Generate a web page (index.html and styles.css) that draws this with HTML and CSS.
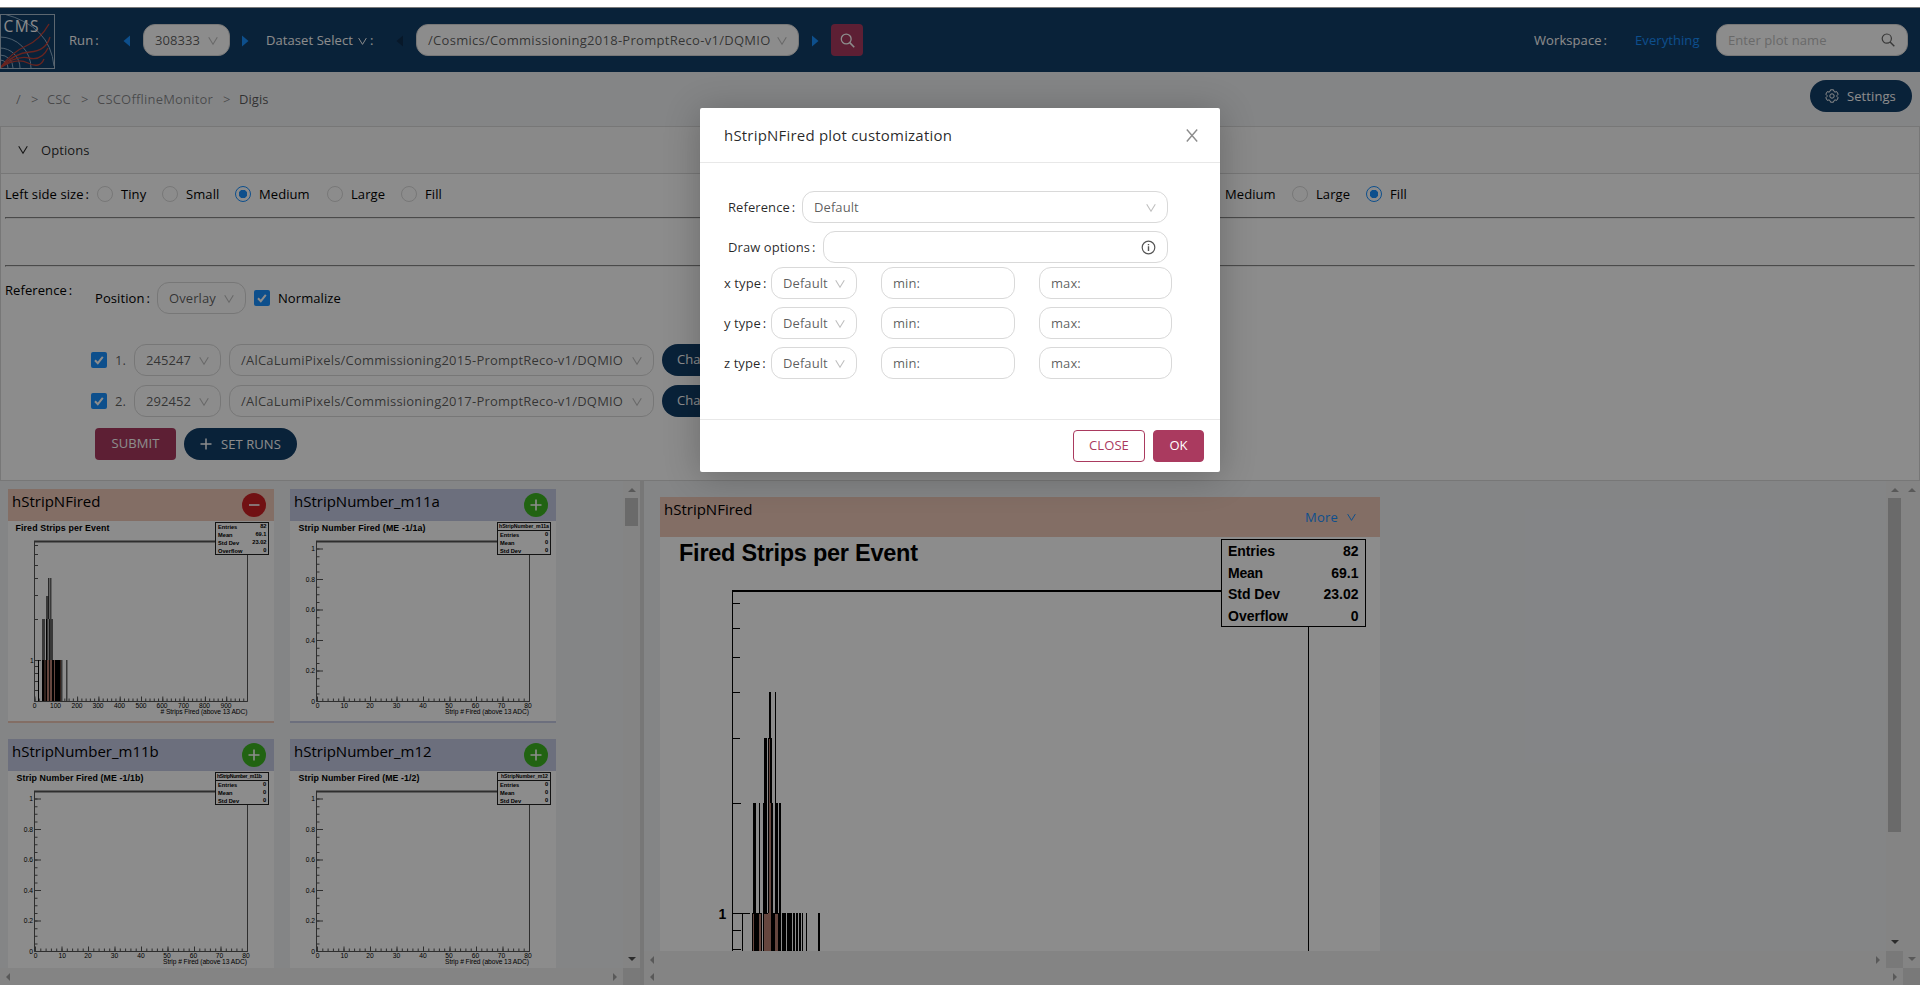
FILE: index.html
```
<!DOCTYPE html>
<html lang="en">
<head>
<meta charset="utf-8">
<title>CMS DQM</title>
<link rel="stylesheet" href="styles.css">
</head>
<body>
<svg class="defs" width="0" height="0">
  <symbol id="chev" viewBox="0 0 10 10"><path d="M.7 1.2 5 8.2 9.3 1.2" fill="none" stroke="currentColor" stroke-width="1.1"/></symbol>
  <symbol id="search" viewBox="0 0 14 14"><circle cx="5.8" cy="5.6" r="4.6" fill="none" stroke="currentColor" stroke-width="1.2"/><path d="m9.1 9 4.2 4.3" stroke="currentColor" stroke-width="1.4"/></symbol>
  <symbol id="check" viewBox="0 0 16 16"><path d="m4 8.2 2.8 3 5-6.4" fill="none" stroke="#fff" stroke-width="2"/></symbol>
  <symbol id="tl" viewBox="0 0 7 12"><path d="M7 .5v11L.5 6z" fill="currentColor"/></symbol>
  <symbol id="tr" viewBox="0 0 7 12"><path d="M0 .5v11L6.5 6z" fill="currentColor"/></symbol>
  <symbol id="axes" viewBox="0 0 266 200" overflow="visible">
    <g stroke="#555" fill="none">
      <path d="M26.5 20V180.5H239.5V20"/>
      <path d="M26 20.5H240" stroke-width="2"/>
      <path d="M28 181V27.5" stroke-width="3" stroke-dasharray="1 6.62"/>
      <path d="M30 181V27.5" stroke-width="6" stroke-dasharray="1 29.48"/>
      <path d="M27 179H240" stroke-width="3" stroke-dasharray="1 4.3"/>
      <path d="M27 178H240" stroke-width="5" stroke-dasharray="1 25.5"/>
    </g>
    <rect x="207.5" y="1.5" width="53" height="32" fill="#fff" stroke="#222"/>
    <path d="M207.5 9.5h53" stroke="#222"/>
  </symbol>
</svg>

<header class="top">
  <svg class="logo" width="55" height="55" viewBox="0 0 55 55">
    <g fill="none" stroke="#8fb0cb" stroke-width="1"><circle cx="0" cy="54" r="8"/><circle cx="0" cy="54" r="13"/><circle cx="0" cy="54" r="20"/><circle cx="0" cy="54" r="31"/><path d="M4 0Q50 12 54 52"/></g>
    <g fill="none" stroke="#c0433a" stroke-width="1.3"><path d="M0 54Q12 38 26 32T49 10"/><path d="M0 54Q14 39 30 38T50 23"/><path d="M0 54Q16 41 29 44T48 34"/><path d="M0 54Q16 43 28 49T44 45"/></g>
    <rect x=".5" y=".5" width="54" height="54" fill="none" stroke="#a9bccd"/>
    <text class="logo-text" x="3.5" y="17.5" textLength="35">CMS</text>
  </svg>
  <span class="run-label">Run<em>:</em></span>
  <svg class="arrow a1" width="7" height="12"><use href="#tl"/></svg>
  <div class="sel w87"><span>308333</span><svg width="10" height="10"><use href="#chev"/></svg></div>
  <svg class="arrow a2" width="7" height="12"><use href="#tr"/></svg>
  <span class="ds">Dataset Select</span><svg class="ds-chev" width="9" height="9"><use href="#chev"/></svg><span class="colon">:</span>
  <svg class="arrow a3" width="7" height="12"><use href="#tl"/></svg>
  <div class="sel w383"><span>/Cosmics/Commissioning2018-PromptReco-v1/DQMIO</span><svg width="10" height="10"><use href="#chev"/></svg></div>
  <svg class="arrow a4" width="7" height="12"><use href="#tr"/></svg>
  <div class="find"><svg width="15" height="15"><use href="#search"/></svg></div>
  <span class="ws">Workspace<em>:</em></span><span class="every">Everything</span>
  <div class="plot-search"><span>Enter plot name</span><svg width="14" height="14"><use href="#search"/></svg></div>
</header>

<nav class="crumbs">
  <span class="c1">/</span><i>&gt;</i><span class="c2">CSC</span><i>&gt;</i><span class="c3">CSCOfflineMonitor</span><i>&gt;</i><span class="last">Digis</span>
  <div class="settings"><svg width="14" height="14" viewBox="0 0 14 14" fill="none" stroke="currentColor"><path d="M5.5.8h3l.5 1.700 1 .6 1.700-.5 1.500 2.600-1.200 1.200v1.200l1.200 1.200-1.500 2.600-1.700-.5-1 .6-.5 1.700h-3L5 11.500l-1-.6-1.700.5L.8 8.800 2 7.600V6.400L.8 5.200l1.500-2.600 1.700.5 1-.6z"/><circle cx="7" cy="7" r="2.200"/></svg><span>Settings</span></div>
</nav>

<section class="options">
  <div class="opt-head"><svg width="10" height="10"><use href="#chev"/></svg><span>Options</span></div>
  <div class="opt-body">
    <div class="radios">
      <span class="lead">Left side size<em>:</em></span>
      <b></b><span class="r41">Tiny</span><b></b><span class="r49">Small</span><b class="on"></b><span class="r67">Medium</span><b></b><span class="r50">Large</span><b></b><span>Fill</span>
      <div class="radios right"><span class="r67">Medium</span><b></b><span class="r50">Large</span><b class="on"></b><span>Fill</span></div>
    </div>
    <hr><div class="gap"></div><hr>
    <div class="ref">
      <span class="ref-label">Reference<em>:</em></span>
      <div class="ref-form">
        <div class="line first"><span class="pos">Position<em>:</em></span><div class="sel w89"><span>Overlay</span><svg width="10" height="10"><use href="#chev"/></svg></div><svg class="cb" width="16" height="16"><use href="#check"/></svg><span class="norm">Normalize</span></div>
        <div class="line item"><svg class="cb" width="16" height="16"><use href="#check"/></svg><span class="num">1.</span><div class="sel w87"><span>245247</span><svg width="10" height="10"><use href="#chev"/></svg></div><div class="sel w425"><span>/AlCaLumiPixels/Commissioning2015-PromptReco-v1/DQMIO</span><svg width="10" height="10"><use href="#chev"/></svg></div><div class="change">Change</div></div>
        <div class="line item"><svg class="cb" width="16" height="16"><use href="#check"/></svg><span class="num">2.</span><div class="sel w87"><span>292452</span><svg width="10" height="10"><use href="#chev"/></svg></div><div class="sel w425"><span>/AlCaLumiPixels/Commissioning2017-PromptReco-v1/DQMIO</span><svg width="10" height="10"><use href="#chev"/></svg></div><div class="change">Change</div></div>
        <div class="line btns"><div class="submit">SUBMIT</div><div class="setruns"><svg width="12" height="12" viewBox="0 0 12 12"><path d="M6 .5v11M.5 6h11" stroke="#fff" stroke-width="1.5"/></svg>SET RUNS</div></div>
      </div>
    </div>
  </div>
</section>

<main class="work">
  <div class="left">
    <div class="plots">
      <div class="card pink"><div class="card-head"><span>hStripNFired</span><svg width="24" height="24"><circle cx="12" cy="12" r="12" fill="#ce1f23"/><path d="M7 12h10.5" stroke="#fff" stroke-width="1.6"/></svg></div>
        <svg class="plot" width="266" height="200" viewBox="0 0 266 200">
          <text class="ptitle" x="7.5" y="10" textLength="94">Fired Strips per Event</text>
          <g stroke="#555" fill="none"><path d="M26.5 20V180.5H239.5V20"/><path d="M26 20.5H240" stroke-width="2"/>
          <path d="M26 24.5h4M26 33.5h4M26 44.5h4M26 57.5h4M26 74.5h4M26 98.5h4M26 139.5h7M26 145.5h4M26 152.5h4M26 160.5h4M26 169.5h4"/>
          <path d="M26.5 179H240" stroke-width="3" stroke-dasharray="1 3.26"/><path d="M26.5 178H240" stroke-width="5" stroke-dasharray="1 20.3"/></g>
          <path d="M36 139h17v41H36z" fill="#b88071"/>
          <g fill="#666"><path d="M34 98h3v41h-3zM38 75h2.5v64H38zM42 57h1.5v82H42zM43 98h2v41h-2zM53 139h1.5v41H53zM58 139h1.5v41H58z"/></g>
          <g fill="#000"><path d="M30 139h1v41h-1zM34 139h2v41h-2zM38 98h1v82h-1zM40.300 57h1v41h-1zM41 98h.8v82H41zM44 139h2v41h-2zM47 139h5.500v41H47zM36.500 139h1v41h-1z"/></g>
          <text class="tick" x="22" y="142">1</text>
          <g class="tick" text-anchor="middle"><text x="26.5" y="187">0</text><text x="47.5" y="187">100</text><text x="69" y="187">200</text><text x="90" y="187">300</text><text x="111.5" y="187">400</text><text x="133" y="187">500</text><text x="154" y="187">600</text><text x="175.5" y="187">700</text><text x="196.5" y="187">800</text><text x="218" y="187">900</text></g>
          <text class="tick" x="152.5" y="193" textLength="87"># Strips Fired (above 13 ADC)</text>
          <rect x="207.5" y="1.5" width="53" height="32" fill="#fff" stroke="#222"/>
          <g class="stat"><text x="210" y="7.5">Entries</text><text x="210" y="15.5">Mean</text><text x="210" y="23.5">Std Dev</text><text x="210" y="31.5">Overflow</text></g>
          <g class="stat" text-anchor="end"><text x="258.5" y="7">82</text><text x="258.5" y="15">69.1</text><text x="258.5" y="23">23.02</text><text x="258.5" y="31">0</text></g>
        </svg></div>
      <div class="card blue"><div class="card-head"><span>hStripNumber_m11a</span><svg width="24" height="24"><circle cx="12" cy="12" r="12" fill="#3cb521"/><path d="M6.5 12h11M12 6.5v11" stroke="#fff" stroke-width="1.6"/></svg></div>
        <svg class="plot" width="266" height="200"><text class="ptitle" x="8.5" y="10" textLength="127">Strip Number Fired (ME -1/1a)</text><use href="#axes" width="266" height="200"/><text class="sname" x="209" y="7" textLength="50">hStripNumber_m11a</text>
          <g class="tick" text-anchor="end"><text x="25" y="30">1</text><text x="25" y="60.5">0.8</text><text x="25" y="91">0.6</text><text x="25" y="121.500">0.4</text><text x="25" y="152">0.2</text><text x="25" y="182.500">0</text></g>
          <g class="tick" text-anchor="middle"><text x="27.5" y="187">0</text><text x="54.3" y="187">10</text><text x="80" y="187">20</text><text x="106.5" y="187">30</text><text x="133" y="187">40</text><text x="159" y="187">50</text><text x="185.5" y="187">60</text><text x="211.5" y="187">70</text><text x="238" y="187">80</text></g>
          <text class="tick" x="155" y="193" textLength="84">Strip # Fired (above 13 ADC)</text>
          <g class="stat"><text x="210" y="15.5">Entries</text><text x="210" y="23.5">Mean</text><text x="210" y="31.5">Std Dev</text><text x="255" y="15">0</text><text x="255" y="23">0</text><text x="255" y="31">0</text></g>
        </svg></div>
      <div class="card blue"><div class="card-head"><span>hStripNumber_m11b</span><svg width="24" height="24"><circle cx="12" cy="12" r="12" fill="#3cb521"/><path d="M6.5 12h11M12 6.5v11" stroke="#fff" stroke-width="1.6"/></svg></div>
        <svg class="plot" width="266" height="200"><text class="ptitle" x="8.5" y="10" textLength="127">Strip Number Fired (ME -1/1b)</text><use href="#axes" width="266" height="200"/><text class="sname" x="209" y="7" textLength="45">hStripNumber_m11b</text>
          <g class="tick" text-anchor="end"><text x="25" y="30">1</text><text x="25" y="60.5">0.8</text><text x="25" y="91">0.6</text><text x="25" y="121.500">0.4</text><text x="25" y="152">0.2</text><text x="25" y="182.500">0</text></g>
          <g class="tick" text-anchor="middle"><text x="27.5" y="187">0</text><text x="54.3" y="187">10</text><text x="80" y="187">20</text><text x="106.5" y="187">30</text><text x="133" y="187">40</text><text x="159" y="187">50</text><text x="185.5" y="187">60</text><text x="211.5" y="187">70</text><text x="238" y="187">80</text></g>
          <text class="tick" x="155" y="193" textLength="84">Strip # Fired (above 13 ADC)</text>
          <g class="stat"><text x="210" y="15.5">Entries</text><text x="210" y="23.5">Mean</text><text x="210" y="31.5">Std Dev</text><text x="255" y="15">0</text><text x="255" y="23">0</text><text x="255" y="31">0</text></g>
        </svg></div>
      <div class="card blue"><div class="card-head"><span>hStripNumber_m12</span><svg width="24" height="24"><circle cx="12" cy="12" r="12" fill="#3cb521"/><path d="M6.5 12h11M12 6.5v11" stroke="#fff" stroke-width="1.6"/></svg></div>
        <svg class="plot" width="266" height="200"><text class="ptitle" x="8.5" y="10" textLength="121">Strip Number Fired (ME -1/2)</text><use href="#axes" width="266" height="200"/><text class="sname" x="211" y="7" textLength="47">hStripNumber_m12</text>
          <g class="tick" text-anchor="end"><text x="25" y="30">1</text><text x="25" y="60.5">0.8</text><text x="25" y="91">0.6</text><text x="25" y="121.500">0.4</text><text x="25" y="152">0.2</text><text x="25" y="182.500">0</text></g>
          <g class="tick" text-anchor="middle"><text x="27.5" y="187">0</text><text x="54.3" y="187">10</text><text x="80" y="187">20</text><text x="106.5" y="187">30</text><text x="133" y="187">40</text><text x="159" y="187">50</text><text x="185.5" y="187">60</text><text x="211.5" y="187">70</text><text x="238" y="187">80</text></g>
          <text class="tick" x="155" y="193" textLength="84">Strip # Fired (above 13 ADC)</text>
          <g class="stat"><text x="210" y="15.5">Entries</text><text x="210" y="23.5">Mean</text><text x="210" y="31.5">Std Dev</text><text x="255" y="15">0</text><text x="255" y="23">0</text><text x="255" y="31">0</text></g>
        </svg></div>
    </div>
    <div class="vbar"><i class="up"></i><div class="thumb short"></div><i class="down dark"></i></div>
    <div class="hbar"><i class="lt"></i><i class="rt"></i></div>
    <div class="corner"></div>
  </div>
  <div class="split"></div>
  <div class="right-pane">
    <div class="zoomed">
      <div class="big">
        <div class="big-head"><span>hStripNFired</span><div class="more">More<svg width="9" height="9"><use href="#chev"/></svg></div></div>
        <svg class="plot" width="720" height="414" viewBox="660 537 720 414">
          <text class="btitle" x="679" y="561" textLength="239">Fired Strips per Event</text>
          <g shape-rendering="crispEdges">
          <path d="M732 590h1v361h-1zM1308 590h1v361h-1zM732 590h577v2H732zM733 603h7v1h-7zM733 628h7v1h-7zM733 657h7v1h-7zM733 692h7v1h-7zM733 738h7v1h-7zM733 803h8v1h-8zM733 913h17v1h-17zM733 930h8v1h-8zM733 949h8v1h-8zM742 913h1v38h-1z"/>
          <path d="M753 913h1v38h-1zM759 913h2v38h-2zM764 913h7v38h-7zM775 913h3v38h-3zM769 738h1v65h-1zM769 803h2v110h-2z" fill="#b88071"/>
          <path d="M769 692h2v46h-2zM775 692h1v111h-1zM764 738h3v175h-3zM768 738h4v1h-4zM768 738h1v175h-1zM770 738h2v65h-2zM763 803h4v110h-4zM771 803h2v110h-2zM775 803h3v110h-3zM779 803h2v110h-2zM753 803h3v110h-3zM759 803h1v110h-1z"/>
          <path d="M752 913h10v1h-10zM763 913h5v1h-5zM773 913h8v1h-8zM752 913h1v38h-1zM754 913h5v38h-5zM761 913h1v38h-1zM763 913h1v38h-1zM771 913h4v38h-4zM778 913h3v38h-3zM782 913h4v38h-4zM787 913h5v38h-5zM793 913h2v38h-2zM796 913h2v38h-2zM799 913h2v38h-2zM802 913h1v38h-1zM806 913h1v38h-1zM818 913h2v38h-2z"/>
          <rect x="1221.5" y="539.5" width="144" height="87" fill="#fff" stroke="#000"/>
          </g>
          <text class="bstat" x="718.5" y="919">1</text>
          <g class="bstat"><text x="1228" y="556" textLength="47">Entries</text><text x="1228" y="578" textLength="35">Mean</text><text x="1228" y="599" textLength="52">Std Dev</text><text x="1228" y="621" textLength="60">Overflow</text></g>
          <g class="bstat" text-anchor="end"><text x="1358.5" y="556">82</text><text x="1358.5" y="578">69.1</text><text x="1358.5" y="599">23.02</text><text x="1358.5" y="621">0</text></g>
        </svg>
      </div>
    </div>
    <div class="vbar inner"><i class="up"></i><div class="thumb long"></div><i class="down dark"></i></div>
    <div class="vbar outer"><i class="up"></i><i class="down"></i></div>
    <div class="hbar inner-h"><i class="lt"></i><i class="rt"></i></div>
    <div class="corner"></div>
    <div class="hbar outer-h"><i class="lt"></i><i class="rt"></i></div>
    <div class="corner end"></div>
  </div>
</main>

<div class="mask">
  <div class="modal">
    <div class="m-head"><span>hStripNFired plot customization</span><svg width="12" height="13" viewBox="0 0 12 13"><path d="m.8.5 10.400 12M11.200.5.8 12.500" stroke="#8c8c8c" stroke-width="1.4"/></svg></div>
    <div class="m-body">
      <div class="m-row wide"><span class="m-ref">Reference<em>:</em></span><div class="sel grow"><span>Default</span><svg width="10" height="10"><use href="#chev"/></svg></div></div>
      <div class="m-row wide tight"><span class="m-draw">Draw options<em>:</em></span><div class="sel grow"><svg class="info" width="15" height="15" viewBox="0 0 15 15"><circle cx="7.5" cy="7.5" r="6.3" fill="none" stroke="#555" stroke-width="1.2"/><path d="M7.5 6.300V11M7.500 3.900v1.300" stroke="#555" stroke-width="1.4"/></svg></div></div>
      <div class="m-row"><span class="m-type">x type<em>:</em></span><div class="sel w86"><span>Default</span><svg width="10" height="10"><use href="#chev"/></svg></div><div class="sel num-in"><span>min:</span></div><div class="sel num-in last"><span>max:</span></div></div>
      <div class="m-row"><span class="m-type">y type<em>:</em></span><div class="sel w86"><span>Default</span><svg width="10" height="10"><use href="#chev"/></svg></div><div class="sel num-in"><span>min:</span></div><div class="sel num-in last"><span>max:</span></div></div>
      <div class="m-row"><span class="m-type">z type<em>:</em></span><div class="sel w86"><span>Default</span><svg width="10" height="10"><use href="#chev"/></svg></div><div class="sel num-in"><span>min:</span></div><div class="sel num-in last"><span>max:</span></div></div>
    </div>
    <div class="m-foot"><div class="close">CLOSE</div><div class="ok">OK</div></div>
  </div>
</div>
</body>
</html>
```
FILE: styles.css
```
* { box-sizing: border-box; }
body { margin: 0; width: 1920px; height: 985px; overflow: hidden; position: relative; display: flex; flex-direction: column; background: #f0f2f5; border-top: 7px solid #fff; font: 13px/22px "Open Sans", "Noto Sans", sans-serif; letter-spacing: .08px; color: rgba(0,0,0,.85); white-space: nowrap; }
.defs { position: absolute; }
svg { flex: none; }
em { font-style: normal; margin-left: 2px; }
.top { height: 65px; flex: none; border-top: 1px solid #ddd; background: #123e68; display: flex; align-items: center; color: #fff; padding-right: 12px; }
.top > span { flex: none; }
.logo { margin-top: 2px; }
.logo-text { font: 15.5px "Open Sans", sans-serif; fill: #fff; }
.run-label { width: 68px; padding-left: 14px; }
.arrow { color: #1890ff; margin-top: 2px; }
.a1 { margin-right: 13px; }
.a2 { margin: 2px 17px 0 12px; }
.ds { width: 92px; }
.ds-chev { margin-top: 2px; }
.colon { width: 29px; padding-left: 3px; }
.a3 { color: #0e2c4b; margin-right: 13px; }
.a4 { margin: 2px 12px 0 13px; }
.sel { height: 32px; flex: none; border: 1px solid #d9d9d9; border-radius: 12px; background: #fff; color: rgba(0,0,0,.65); display: flex; align-items: center; justify-content: space-between; padding: 0 11px; }
.sel span { margin-top: -1px; }
.sel svg { color: #bfbfbf; margin-top: 1px; }
.w86 { width: 86px; } .w87 { width: 87px; } .w89 { width: 89px; }
.w383 { width: 383px; letter-spacing: .29px; } .w425 { width: 425px; letter-spacing: .21px; }
.find { width: 32px; height: 32px; background: #aa3a5f; border-radius: 4px; display: flex; align-items: center; justify-content: center; }
.ws { margin-left: auto; width: 101px; }
.every { width: 81px; color: #1890ff; }
.plot-search { width: 192px; height: 32px; border: 1px solid #d9d9d9; border-radius: 12px; background: #fff; color: #bfbfbf; display: flex; align-items: center; justify-content: space-between; padding: 0 12px 0 11px; }
.plot-search svg { color: #666; }
.crumbs { height: 54px; flex: none; display: flex; align-items: center; padding: 0 8px 0 16px; color: rgba(0,0,0,.45); }
.crumbs i { font-style: normal; width: 16px; }
.c1 { width: 15px; } .c2 { width: 34px; } .c3 { width: 126px; letter-spacing: .2px; }
.crumbs .last { color: rgba(0,0,0,.65); }
.settings { margin-left: auto; margin-top: -6px; width: 102px; height: 32px; border-radius: 16px; background: #123e68; color: #fff; display: flex; align-items: center; padding-left: 15px; gap: 8px; }
.options { height: 355px; flex: none; border: 1px solid #d9d9d9; background: #fff; }
.opt-head { height: 47px; border-bottom: 1px solid #d9d9d9; background: #fafafa; display: flex; align-items: center; padding: 0 0 1px 17px; gap: 13px; }
.opt-body { padding: 0 4px; }
.radios { height: 43px; display: flex; align-items: center; color: #000; padding-bottom: 3px; }
.radios b { width: 16px; height: 16px; flex: none; border: 1px solid #d9d9d9; border-radius: 50%; margin-right: 8px; }
.radios b.on { border-color: #1890ff; background: radial-gradient(circle, #1890ff 4px, #fff 4.5px); }
.lead { width: 92px; }
.r41 { width: 41px; } .r49 { width: 49px; } .r67 { width: 68px; } .r50 { width: 50px; }
.right { margin-left: auto; width: 690px; padding-bottom: 0; }
.right .r67 { width: 67px; }
hr { height: 2px; margin: 0; border: 1px solid; border-color: #888 #eee #eee #888; }
.gap { height: 46px; }
.ref { display: flex; color: #000; }
.ref-label { width: 90px; padding-top: 12px; }
.line { display: flex; align-items: center; height: 32px; }
.first { margin-top: 15px; }
.pos { width: 62px; }
.cb { background: #1890ff; border-radius: 2px; margin: 0 8px; }
.item { margin: 30px 0 0 -12px; }
.item + .item { margin-top: 9px; }
.num { width: 19px; color: rgba(0,0,0,.65); }
.item .w87 { margin-right: 8px; }
.change { margin-left: 8px; height: 32px; width: 88px; border-radius: 16px; background: #123e68; color: #fff; line-height: 31px; padding-left: 15px; }
.btns { margin-top: 11px; gap: 8px; color: #fff; }
.submit { width: 81px; height: 32px; background: #aa3a5f; border-radius: 4px; text-align: center; line-height: 31px; }
.setruns { width: 113px; height: 32px; background: #123e68; border-radius: 16px; display: flex; align-items: center; padding-left: 16px; gap: 9px; }
.work { height: 504px; display: flex; flex: none; letter-spacing: 0; }
.left { width: 640px; display: grid; grid-template: 487px 17px / 623px 17px; }
.plots { display: grid; grid-template-columns: 266px 266px; grid-auto-rows: 234px; gap: 16px; padding: 8px; overflow: hidden; }
.card { background: #fff; border-bottom: 2px solid; }
.pink { border-color: #efc8b8; } .blue { border-color: #c5cae4; }
.card-head { height: 32px; display: flex; justify-content: space-between; padding: 4px 8px 0 4px; font-size: 15px; line-height: 18px; color: #000; }
.card-head span, .big-head span { margin-top: -1.5px; }
.pink .card-head, .big-head { background: #efc8b8; }
.blue .card-head { background: #c5cae4; }
.plot { display: block; }
text { font-family: "Liberation Sans", Arial, sans-serif; white-space: pre; letter-spacing: 0; }
.ptitle { font-size: 8.8px; font-weight: bold; }
.tick { font-size: 6.7px; }
.stat { font-size: 5.7px; font-weight: bold; }
.sname { font-size: 5.2px; font-weight: bold; }
.btitle { font-size: 23.5px; font-weight: bold; }
.bstat { font-size: 14px; font-weight: bold; }
.vbar { background: #f1f1f1; width: 17px; display: flex; flex-direction: column; align-items: center; padding: 7px 0; }
.hbar { background: #f1f1f1; height: 17px; display: flex; align-items: center; justify-content: space-between; padding: 0 6px; }
.vbar i, .hbar i { width: 0; height: 0; border: 4px solid transparent; color: #a3a3a3; flex: none; }
.vbar .up { border-top: 0; border-bottom-color: currentColor; }
.vbar .down { border-bottom: 0; border-top-color: currentColor; margin-top: auto; }
.vbar .dark { color: #505050; }
.hbar .lt { border-left: 0; border-right-color: currentColor; }
.hbar .rt { border-right: 0; border-left-color: currentColor; }
.thumb { width: 13px; background: #c1c1c1; margin-top: 6px; flex: none; }
.short { height: 28px; } .long { height: 334px; }
.corner { background: #dcdcdc; }
.split { width: 4px; background: #d9d9d9; }
.right-pane { width: 1276px; display: grid; grid-template: 470px 17px 17px / 1242px 17px 17px; }
.zoomed { padding: 16px; padding-bottom: 0; overflow: hidden; }
.outer { grid-row: 1 / 3; grid-column: 3; }
.outer-h { grid-column: 1 / 3; }
.big { width: 720px; background: #fff; }
.big-head { height: 40px; display: flex; justify-content: space-between; padding: 4px 24px 0 4px; font-size: 15px; line-height: 18px; color: #000; }
.more { height: 32px; color: #1890ff; font-size: 13px; line-height: 28px; display: flex; align-items: center; gap: 9px; letter-spacing: .2px; }
.mask { position: absolute; top: 0; left: 0; width: 1920px; height: 978px; background: rgba(0,0,0,.45); padding-top: 101px; }
.modal { width: 520px; height: 364px; margin: 0 auto; background: #fff; border-radius: 2px; box-shadow: 0 4px 36px rgba(0,0,0,.24); display: flex; flex-direction: column; }
.m-head { height: 55px; border-bottom: 1px solid #e8e8e8; display: flex; align-items: center; justify-content: space-between; padding: 0 22px 0 24px; font-size: 15px; font-weight: 500; letter-spacing: .2px; }
.m-body { height: 256px; padding: 28px 48px 0 23px; display: flex; flex-direction: column; gap: 8px; }
.m-row { display: flex; align-items: center; padding-left: 1px; }
.m-row > span { margin-top: -1px; }
.wide { padding: 0 4px 0 5px; }
.tight { margin-bottom: -4px; }
.grow { flex: 1; }
.m-ref { width: 74px; } .m-draw { width: 95px; } .m-type { width: 47px; }
.info { margin-left: auto; }
.num-in { width: 134px; margin-left: 24px; }
.num-in.last { width: 133px; }
.m-foot { flex: 1; border-top: 1px solid #e8e8e8; display: flex; justify-content: flex-end; padding: 10px 16px; gap: 8px; }
.close, .ok { height: 32px; line-height: 29px; border: 1px solid #aa3a5f; border-radius: 4px; text-align: center; color: #aa3a5f; width: 72px; }
.ok { width: 51px; background: #aa3a5f; color: #fff; }
```
